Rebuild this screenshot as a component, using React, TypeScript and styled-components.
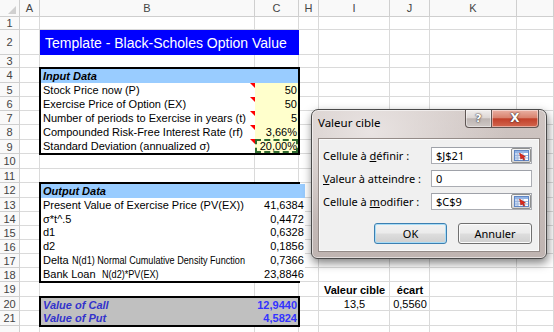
import React from 'react';
import styled, { createGlobalStyle, css } from 'styled-components';

const GlobalStyle = createGlobalStyle`
  html, body {
    margin: 0;
    padding: 0;
    background: #fff;
    overflow: hidden;
  }
`;

const COL_WIDTHS = '20px 20px 215px 44px 20px 71px 40px 87px 1fr';
const COL_NAMES = ['', 'A', 'B', 'C', 'H', 'I', 'J', 'K', ''];
const ROW_HEIGHTS = [17, 13, 25, 13, 15, 14, 14, 14, 15, 14, 15, 14, 15, 14, 14, 14, 14, 14, 14, 15, 14, 15, 20];

const inputs = [
  { label: 'Stock Price now (P)', value: '50' },
  { label: 'Exercise Price of Option (EX)', value: '50' },
  { label: 'Number of periods to Exercise in years (t)', value: '5' },
  { label: 'Compounded Risk-Free Interest Rate (rf)', value: '3,66%' },
  { label: 'Standard Deviation (annualized σ)', value: '20,00%', marquee: true },
];

const Sheet = styled.div`
  position: relative;
  width: 554px;
  height: 332px;
  overflow: hidden;
  display: grid;
  grid-template-columns: ${COL_WIDTHS};
  grid-template-rows: ${ROW_HEIGHTS.map((h) => h + 'px').join(' ')};
  font-family: 'Liberation Sans', Arial, sans-serif;
  font-size: 11px;
  color: #000;
`;

const Cell = styled.div<{ $r: number; $c: number }>`
  grid-row: ${(p) => p.$r + 1};
  grid-column: ${(p) => p.$c + 1};
  border-right: 1px solid #dadada;
  border-bottom: 1px solid #dadada;
`;

const HeadCell = styled(Cell)<{ $corner?: boolean }>`
  position: relative;
  background: #f9f9f9;
  border-color: #cfcfcf;
  color: #444;
  display: flex;
  align-items: center;
  justify-content: center;
  font-size: 11px;

  ${(p) =>
    p.$corner &&
    css`
      &::after {
        content: '';
        position: absolute;
        right: 3px;
        bottom: 2px;
        border-bottom: 8px solid #d0d0d0;
        border-left: 8px solid transparent;
      }
    `}
`;

const TitleBar = styled.div`
  grid-row: 3;
  grid-column: 3 / span 2;
  background: #0000ff;
  color: #fff;
  font-size: 14px;
  display: flex;
  align-items: center;
  padding-left: 5px;
  white-space: nowrap;
  z-index: 1;
`;

const Block = styled.div<{ $row: number; $span: number }>`
  grid-row: ${(p) => p.$row + 1} / span ${(p) => p.$span};
  grid-column: 3 / span 2;
  margin: -1px;
  border: 2px solid #000;
  display: grid;
  grid-template-columns: 1fr 43px;
  grid-auto-rows: 1fr;
  z-index: 1;
`;

const BlockHead = styled.div`
  grid-column: 1 / span 2;
  background: #99ccff;
  font-weight: bold;
  font-style: italic;
  padding-left: 2px;
  display: flex;
  align-items: flex-end;
  line-height: 13px;
`;

const Label = styled.div<{ $note?: boolean; $fill?: string }>`
  position: relative;
  background: ${(p) => p.$fill || '#fff'};
  padding-left: 2px;
  display: flex;
  align-items: flex-end;
  white-space: nowrap;
  line-height: 13px;

  ${(p) =>
    p.$note &&
    css`
      &::after {
        content: '';
        position: absolute;
        top: 0;
        right: 0;
        border-top: 5px solid #ff0000;
        border-left: 5px solid transparent;
      }
    `}
`;

const Value = styled.div<{ $fill?: string; $marquee?: boolean }>`
  background: ${(p) => p.$fill || '#fff'};
  padding-right: 1px;
  display: flex;
  align-items: flex-end;
  justify-content: flex-end;
  white-space: nowrap;
  line-height: 13px;

  ${(p) =>
    p.$marquee &&
    css`
      outline: 2px dashed #2f6b2f;
      outline-offset: -2px;
    `}
`;

const Small = styled.span`
  display: inline-block;
  font-size: 10px;
  transform: scaleX(0.91);
  transform-origin: left bottom;
`;

const ResultLabel = styled(Label)`
  color: #3333cc;
  font-weight: bold;
  font-style: italic;
`;

const ResultValue = styled(Value)`
  color: #3333ff;
  font-weight: bold;
`;

const SheetText = styled.div<{ $r: number; $c: number; $bold?: boolean }>`
  grid-row: ${(p) => p.$r + 1};
  grid-column: ${(p) => p.$c + 1};
  font-weight: ${(p) => (p.$bold ? 'bold' : 'normal')};
  display: flex;
  align-items: flex-end;
  justify-content: center;
  white-space: nowrap;
  line-height: 13px;
`;

/* dialog */

const Dialog = styled.div`
  position: absolute;
  left: 311px;
  top: 109px;
  width: 236px;
  height: 150px;
  box-sizing: border-box;
  border: 1px solid #4a4a4a;
  border-radius: 7px 7px 6px 6px;
  background: radial-gradient(ellipse at 25% 15%, rgba(236, 231, 230, 0.9) 0%, rgba(236, 231, 230, 0) 55%),
    linear-gradient(#cfc5c2, #bfb4b1);
  box-shadow: 1px 4px 10px rgba(0, 0, 0, 0.5), inset 0 0 0 1px rgba(255, 255, 255, 0.55);
  display: flex;
  flex-direction: column;
  font-family: 'Noto Sans', 'Open Sans', sans-serif;
  font-size: 11px;
  color: #000;
  z-index: 5;
`;

const TitleRow = styled.div`
  height: 28px;
  display: flex;
  justify-content: space-between;
  align-items: flex-start;
  padding: 0 7px 0 6px;
  flex-shrink: 0;
`;

const TitleText = styled.div`
  font-size: 11.5px;
  margin-top: 5px;
`;

const Caption = styled.div`
  display: flex;
  height: 18px;
`;

const CaptionButton = styled.div<{ $close?: boolean }>`
  width: ${(p) => (p.$close ? 47 : 27)}px;
  height: 18px;
  box-sizing: border-box;
  border: 1px solid #5f5654;
  border-top: none;
  border-radius: ${(p) => (p.$close ? '0 0 4px 0' : '0 0 0 4px')};
  ${(p) => (p.$close ? 'border-left: none;' : '')}
  background: ${(p) =>
    p.$close
      ? 'linear-gradient(#eab1a4, #d9836f 45%, #c2402a 52%, #d2664f)'
      : 'linear-gradient(#f1eeed, #ddd7d5 45%, #bdb5b2 52%, #cfc8c6)'};
  box-shadow: inset 0 0 0 1px rgba(255, 255, 255, 0.45);
  color: #fff;
  font-family: 'DejaVu Sans', sans-serif;
  font-weight: bold;
  font-size: ${(p) => (p.$close ? 12 : 11)}px;
  line-height: 17px;
  text-align: center;
  text-shadow: 0 0 2px #3a2a28, 0 0 1px #3a2a28;
`;

const Client = styled.div`
  flex: 1;
  margin: 0 6px 6px 6px;
  background: #f0f0f0;
  border: 1px solid #948b88;
  box-shadow: inset 0 0 0 1px #fafafa;
  padding: 8px 7px 0 4px;
  display: flex;
  flex-direction: column;
`;

const Form = styled.div`
  display: grid;
  grid-template-columns: 1fr 101px;
  grid-auto-rows: 17px;
  row-gap: 6px;
  align-items: center;
`;

const FieldLabel = styled.div`
  white-space: nowrap;
`;

const Field = styled.div`
  height: 17px;
  box-sizing: border-box;
  border: 1px solid #abadb3;
  border-top-color: #9ea1a8;
  background: #fff;
  display: flex;
  align-items: center;
  justify-content: space-between;
  padding-left: 4px;
`;

const PickButton = styled.div`
  width: 20px;
  height: 15px;
  box-sizing: border-box;
  border: 1px solid #8e8f8f;
  border-radius: 2px;
  background: linear-gradient(#f4f4f4, #e3e3e3 50%, #d5d5d5);
  display: flex;
  align-items: center;
  justify-content: center;
`;

const Buttons = styled.div`
  display: flex;
  justify-content: flex-end;
  gap: 11px;
  margin-top: 13px;
`;

const PushButton = styled.div<{ $default?: boolean }>`
  width: ${(p) => (p.$default ? 73 : 74)}px;
  height: 21px;
  box-sizing: border-box;
  border: 1px solid ${(p) => (p.$default ? '#3c7fb1' : '#707070')};
  border-radius: 3px;
  background: linear-gradient(#f2f2f2, #ebebeb 48%, #dddddd 52%, #cfcfcf);
  box-shadow: inset 0 0 0 1px ${(p) => (p.$default ? '#a8dcf6' : '#fbfbfb')};
  display: flex;
  align-items: center;
  justify-content: center;
`;

const PickIcon = () => (
  <svg width="15" height="11" viewBox="0 0 15 11">
    <rect x="0.5" y="0.5" width="14" height="10" fill="#fff" stroke="#5f86c4" />
    <rect x="1" y="1" width="13" height="2" fill="#8fb2e6" />
    <rect x="1" y="3" width="3" height="7" fill="#c3d6f2" />
    <path d="M1 5.5h13M1 8h13M4 1v9M9 1v9" stroke="#9db6dd" strokeWidth="1" />
    <path d="M5.5 3 L11.5 6.8 L9.6 7.3 L10.9 9.6 L9.7 10.2 L8.4 7.9 L6.8 9.2 Z" fill="#dd2a1c" stroke="#9c1610" strokeWidth="0.5" />
  </svg>
);

const GoalSeekDialog = () => (
  <Dialog>
    <TitleRow>
      <TitleText>Valeur cible</TitleText>
      <Caption>
        <CaptionButton>?</CaptionButton>
        <CaptionButton $close>X</CaptionButton>
      </Caption>
    </TitleRow>
    <Client>
      <Form>
        <FieldLabel>
          Cellule à <u>d</u>éfinir :
        </FieldLabel>
        <Field>
          $J$21
          <PickButton>
            <PickIcon />
          </PickButton>
        </Field>
        <FieldLabel>
          <u>V</u>aleur à atteindre :
        </FieldLabel>
        <Field>0</Field>
        <FieldLabel>
          Cellule à <u>m</u>odifier :
        </FieldLabel>
        <Field>
          $C$9
          <PickButton>
            <PickIcon />
          </PickButton>
        </Field>
      </Form>
      <Buttons>
        <PushButton $default>OK</PushButton>
        <PushButton>Annuler</PushButton>
      </Buttons>
    </Client>
  </Dialog>
);

export default function App() {
  return (
    <>
      <GlobalStyle />
      <Sheet>
        {ROW_HEIGHTS.map((_, r) =>
          COL_NAMES.map((name, c) =>
            r === 0 || c === 0 ? (
              <HeadCell key={`${r}-${c}`} $r={r} $c={c} $corner={r === 0 && c === 0}>
                {r === 0 ? name : c === 0 ? r : ''}
              </HeadCell>
            ) : (
              <Cell key={`${r}-${c}`} $r={r} $c={c} />
            ),
          ),
        )}

        <TitleBar>Template - Black-Scholes Option Value</TitleBar>

        <Block $row={4} $span={6}>
          <BlockHead>Input Data</BlockHead>
          {inputs.map((row) => (
            <React.Fragment key={row.label}>
              <Label $note>{row.label}</Label>
              <Value $fill="#ffffcc" $marquee={row.marquee}>
                {row.value}
              </Value>
            </React.Fragment>
          ))}
        </Block>

        <Block $row={12} $span={7}>
          <BlockHead>Output Data</BlockHead>
          <Label>Present Value of Exercise Price (PV(EX))</Label>
          <Value>41,6384</Value>
          <Label>σ*t^.5</Label>
          <Value>0,4472</Value>
          <Label>d1</Label>
          <Value>0,6328</Value>
          <Label>d2</Label>
          <Value>0,1856</Value>
          <Label>
            Delta&nbsp;<Small>N(d1) Normal Cumulative Density Function</Small>
          </Label>
          <Value>0,7366</Value>
          <Label>
            Bank Loan&nbsp;&nbsp;<Small>N(d2)*PV(EX)</Small>
          </Label>
          <Value>23,8846</Value>
        </Block>

        <Block $row={20} $span={2}>
          <ResultLabel $fill="#c0c0c0">Value of Call</ResultLabel>
          <ResultValue $fill="#c0c0c0">12,9440</ResultValue>
          <ResultLabel $fill="#c0c0c0">Value of Put</ResultLabel>
          <ResultValue $fill="#c0c0c0">4,5824</ResultValue>
        </Block>

        <SheetText $r={19} $c={5} $bold>
          Valeur cible
        </SheetText>
        <SheetText $r={19} $c={6} $bold>
          écart
        </SheetText>
        <SheetText $r={20} $c={5}>
          13,5
        </SheetText>
        <SheetText $r={20} $c={6}>
          0,5560
        </SheetText>

        <GoalSeekDialog />
      </Sheet>
    </>
  );
}
